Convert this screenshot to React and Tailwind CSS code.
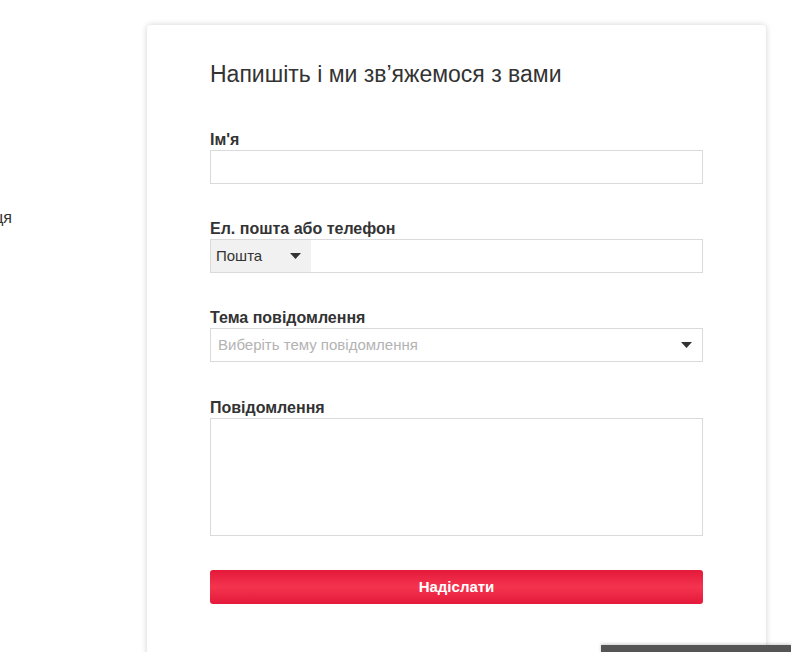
import React from 'react'

const Caret = ({ className }) => (
    <svg className={className} width="11" height="6" viewBox="0 0 11 6">
        <path d="M0 0 H11 L5.5 6 Z" fill="#333" />
    </svg>
)

const Label = ({ children }) => (
    <label className="block text-[16px] leading-[20px] font-bold text-[#333]">{children}</label>
)

export default function App() {
    return (
        <div className="relative h-[652px] overflow-hidden bg-white text-[#333]" style={{ fontFamily: '"Liberation Sans", Arial, sans-serif' }}>
            <div className="flex items-start">
                {/* side menu, cut off by the left edge */}
                <div className="w-[147px] shrink-0 pt-[208px]">
                    <div className="w-[12px] flex justify-end whitespace-nowrap text-[16px] leading-[20px] text-[#333]">
                        Співпраця
                    </div>
                </div>

                {/* form card */}
                <div className="mt-[25px] w-[619px] shrink-0 rounded-[4px] bg-white shadow-[0_0_6px_rgba(0,0,0,0.18)] pt-[35px] pb-[80px] pl-[63px] pr-[63px]">
                    <h2 className="text-[23px] leading-[28px] font-normal text-[#333]">Напишіть і ми зв’яжемося з вами</h2>

                    <div className="mt-[42px]">
                        <Label>Ім'я</Label>
                        <div className="h-[34px] border border-[#dadada] bg-white" />
                    </div>

                    <div className="mt-[35px]">
                        <Label>Ел. пошта або телефон</Label>
                        <div className="h-[34px] border border-[#dadada] bg-white flex">
                            <div className="w-[100px] bg-[#f1f1f1] flex items-center pl-[5px] pr-[10px] justify-between">
                                <span className="text-[15px] text-[#333]">Пошта</span>
                                <Caret />
                            </div>
                        </div>
                    </div>

                    <div className="mt-[35px]">
                        <Label>Тема повідомлення</Label>
                        <div className="h-[34px] border border-[#dadada] bg-white flex items-center justify-between pl-[7px] pr-[10px]">
                            <span className="text-[15px] text-[#b3b3b3]">Виберіть тему повідомлення</span>
                            <Caret />
                        </div>
                    </div>

                    <div className="mt-[36px]">
                        <Label>Повідомлення</Label>
                        <div className="h-[118px] border border-[#dadada] bg-white" />
                    </div>

                    <button className="mt-[34px] w-full h-[34px] rounded-[3px] bg-[linear-gradient(to_bottom,#e4193a_0%,#f4344f_50%,#e4193a_100%)] text-white text-[15px] font-bold">
                        Надіслати
                    </button>
                </div>
            </div>

            {/* dark widget peeking at bottom */}
            <div className="absolute left-[601px] top-[645px] w-[190px] h-[20px] bg-[#555] shadow-[0_-1px_3px_rgba(0,0,0,0.2)]" />
        </div>
    )
}
